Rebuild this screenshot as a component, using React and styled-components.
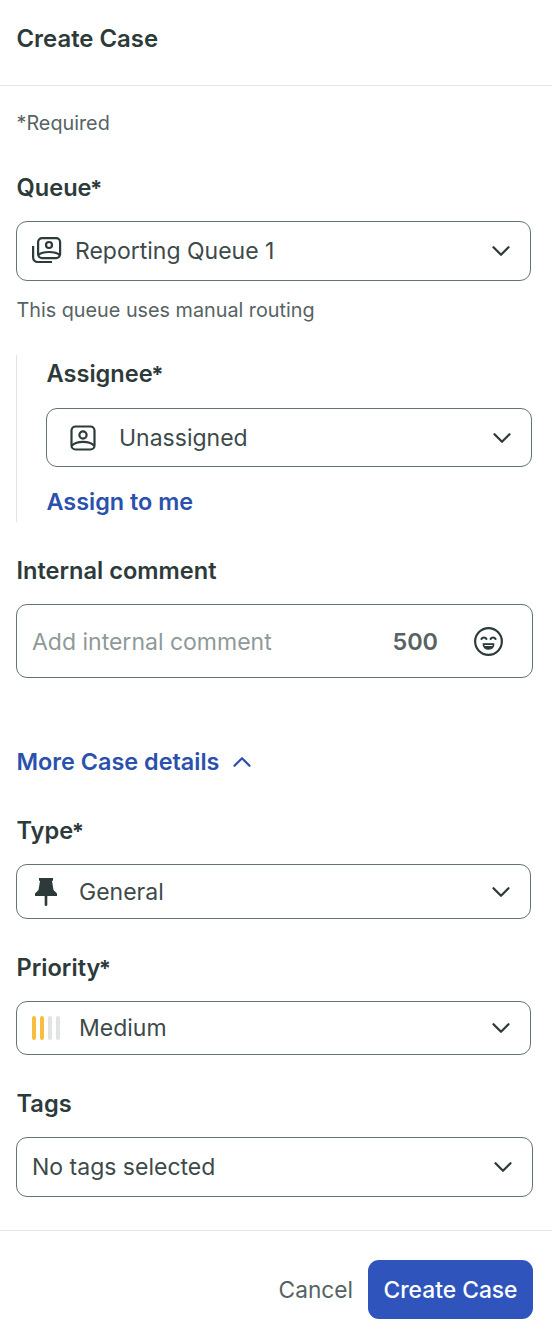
import React from 'react'
import styled, { createGlobalStyle } from 'styled-components'
import { ChevronDown, ChevronUp } from 'lucide-react'

const Global = createGlobalStyle`
  html, body { margin: 0; padding: 0; background: #fff; }
  body { font-family: Inter, "Liberation Sans", sans-serif; color: #2e3a3a; }
  * { box-sizing: border-box; }
`
const Panel = styled.div`
  width: 552px;
  height: 1338px;
  display: flex;
  flex-direction: column;
  background: #fff;
`
const Header = styled.header`
  height: 86px;
  padding: 25px 16.5px 0;
  border-bottom: 1px solid #e2e4e4;
  font-size: 23.9px;
  line-height: 28px;
  font-weight: 600;
  color: #2d3a3a;
`
const Body = styled.section`
  flex: 1;
  display: flex;
  flex-direction: column;
  padding: 25px 19px 0 16px;
`
const Hint = styled.div`
  font-size: 19.8px;
  line-height: 24px;
  color: #566363;
  padding-left: 0.5px;
  margin-top: ${p => p.$top || 0}px;
`
const Label = styled.div`
  font-size: 23.6px;
  line-height: 28px;
  font-weight: 600;
  color: #2d3a3a;
  height: 28px;
  padding-left: 0.5px;
  margin-top: ${p => p.$top || 0}px;
`
const Star = styled.span`
  font-size: 22px;
  font-weight: 700;
  margin-left: -1.5px;
`
const Select = styled.div`
  display: flex;
  align-items: center;
  height: ${p => p.$h}px;
  width: ${p => p.$w || 515}px;
  margin-top: ${p => p.$top || 0}px;
  padding: 0 14px 0 ${p => p.$left}px;
  border: 1px solid #667373;
  border-radius: 11px;
  font-size: 23px;
  color: #3d4a4a;
  background: #fff;
`
const IconSlot = styled.span`
  display: flex;
  width: ${p => p.$w}px;
  flex: none;
`
const Value = styled.span`
  flex: 1;
`
const Assignee = styled.div`
  margin-top: 33px;
  height: 167px;
  padding: 5px 0 0 29px;
  border-left: 1px solid #e2e4e4;
`
const TextLink = styled.div`
  display: flex;
  align-items: center;
  gap: 8px;
  height: 28px;
  font-size: 23.4px;
  line-height: 28px;
  font-weight: 600;
  color: #2a51ad;
  padding-left: 0.5px;
  margin-top: ${p => p.$top || 0}px;
`
const Comment = styled.div`
  display: flex;
  align-items: center;
  width: 517px;
  height: 74px;
  margin-top: 19px;
  padding: 1px 29px 0 15px;
  border: 1px solid #667373;
  border-radius: 11px;
`
const Placeholder = styled.span`
  flex: 1;
  font-size: 23px;
  color: #8f9999;
`
const Counter = styled.span`
  font-size: 23.4px;
  font-weight: 600;
  color: #566363;
  margin-right: 36px;
`
const Bars = styled.span`
  display: flex;
  gap: 4px;
`
const Bar = styled.span`
  width: 4px;
  height: 24px;
  border-radius: 2px;
  background: ${p => (p.$on ? '#f7bd3f' : '#e2e4e4')};
`
const Footer = styled.footer`
  height: 108px;
  display: flex;
  align-items: flex-start;
  justify-content: flex-end;
  gap: 15px;
  padding: 29px 19px 0 0;
  border-top: 1px solid #e2e4e4;
`
const Cancel = styled.button`
  height: 59px;
  padding: 0;
  border: 0;
  background: none;
  font: inherit;
  font-size: 22.7px;
  color: #566363;
`
const Primary = styled.button`
  width: 165px;
  height: 59px;
  padding: 0;
  border: 0;
  border-radius: 11px;
  background: #2f55bd;
  color: #fff;
  font: inherit;
  font-size: 22.8px;
  font-weight: 500;
`
const Chevron = () => <ChevronDown size={30} strokeWidth={1.8} color="#2d3a3a" />

const PortraitIcon = () => (
  <svg width="28" height="28" viewBox="0 0 28 28" fill="none" stroke="#2d3a3a" strokeWidth="2.2">
    <rect x="2.500" y="2.500" width="23" height="23" rx="4" />
    <circle cx="14" cy="11" r="3.600" />
    <path d="M3 21.500c3-3 7-3.600 11-3.600s8 .6 11 3.600" />
  </svg>
)
const StackIcon = () => (
  <svg width="30" height="28" viewBox="0 0 30 28" fill="none" stroke="#2d3a3a" strokeWidth="2.2">
    <rect x="6.100" y="1.100" width="22" height="20" rx="4" />
    <circle cx="17" cy="8" r="3" />
    <path d="M6.500 18c2.500-2.500 6.500-3 10.500-3s8 .5 10.500 3" />
    <path d="M1.100 9v11.500a4.500 4.500 0 0 0 4.500 4.500H20" />
  </svg>
)
const PinIcon = () => (
  <svg width="22" height="28" viewBox="0 0 22 28" fill="#2d3a3a">
    <path d="M4 0h14v2.500l-1 .5 1.500 9 3.500 3.500V18H0v-2.500L3.500 12 5 3 4 2.500z" />
    <rect x="9.700" y="17" width="2.600" height="11" rx="1.300" />
  </svg>
)
const SmileIcon = () => (
  <svg width="29" height="29" viewBox="0 0 28 28" fill="none" stroke="#2d3a3a" strokeWidth="2.100" strokeLinecap="round">
    <circle cx="14" cy="14" r="12.900" />
    <path d="M7.200 11.500c1-1.800 3.800-1.800 4.800 0M16 11.500c1-1.800 3.800-1.800 4.800 0" />
    <path d="M8.800 16.200h10.400c0 3.300-2.200 5.200-5.200 5.200s-5.200-1.900-5.200-5.200z" fill="#2d3a3a" strokeWidth="1.100" strokeLinejoin="round" />
    <path d="M10.500 17.800h7" stroke="#fff" strokeWidth="1" />
  </svg>
)

export default function App() {
  return (
    <Panel>
      <Global />
      <Header>Create Case</Header>
      <Body>
        <Hint>*Required</Hint>
        <Label $top={39}>Queue<Star>*</Star></Label>
        <Select $h={60} $left={15} $top={19}>
          <IconSlot $w={43}><StackIcon /></IconSlot>
          <Value>Reporting Queue 1</Value>
          <Chevron />
        </Select>
        <Hint $top={17}>This queue uses manual routing</Hint>
        <Assignee>
          <Label>Assignee<Star>*</Star></Label>
          <Select $h={59} $w={486} $left={22} $top={20}>
            <IconSlot $w={50}><PortraitIcon /></IconSlot>
            <Value>Unassigned</Value>
            <Chevron />
          </Select>
          <TextLink $top={21}>Assign to me</TextLink>
        </Assignee>
        <Label $top={35}>Internal comment</Label>
        <Comment>
          <Placeholder>Add internal comment</Placeholder>
          <Counter>500</Counter>
          <SmileIcon />
        </Comment>
        <TextLink $top={70}>
          More Case details
          <ChevronUp size={30} strokeWidth={1.8} color="#2a51ad" />
        </TextLink>
        <Label $top={41}>Type<Star>*</Star></Label>
        <Select $h={55} $left={18} $top={19}>
          <IconSlot $w={44}><PinIcon /></IconSlot>
          <Value>General</Value>
          <Chevron />
        </Select>
        <Label $top={35}>Priority<Star>*</Star></Label>
        <Select $h={54} $left={15} $top={19}>
          <IconSlot $w={47}>
            <Bars>
              <Bar $on />
              <Bar $on />
              <Bar />
              <Bar />
            </Bars>
          </IconSlot>
          <Value>Medium</Value>
          <Chevron />
        </Select>
        <Label $top={35}>Tags</Label>
        <Select $h={60} $w={517} $left={15} $top={19}>
          <Value>No tags selected</Value>
          <Chevron />
        </Select>
      </Body>
      <Footer>
        <Cancel>Cancel</Cancel>
        <Primary>Create Case</Primary>
      </Footer>
    </Panel>
  )
}
